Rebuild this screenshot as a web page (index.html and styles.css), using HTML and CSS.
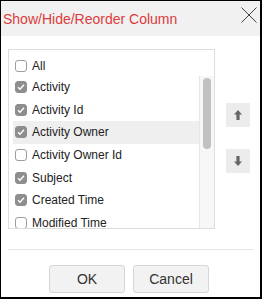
FILE: index.html
```html
<!DOCTYPE html>
<html>
<head>
<meta charset="utf-8">
<link rel="stylesheet" href="styles.css">
</head>
<body>
<div class="dialog">
  <div class="header">
    <span class="title">Show/Hide/Reorder Column</span>
    <span class="close"><svg width="16" height="16" viewBox="0 0 16 16"><path d="M0.5 0.5 L15.5 15.5 M15.5 0.5 L0.5 15.5" stroke="#444" stroke-width="1" fill="none"/></svg></span>
  </div>
  <div class="body">
    <div class="listbox">
      <div class="row all"><span class="cb"></span>All</div>
      <div class="scroll">
        <div class="items">
          <div class="row"><span class="cb on"><svg width="12" height="12" viewBox="0 0 12 12"><path d="M3 6.2 L5 8.2 L9 3.8" stroke="#fff" stroke-width="1.4" fill="none"/></svg></span>Activity</div>
          <div class="row"><span class="cb on"><svg width="12" height="12" viewBox="0 0 12 12"><path d="M3 6.2 L5 8.2 L9 3.8" stroke="#fff" stroke-width="1.4" fill="none"/></svg></span>Activity Id</div>
          <div class="row sel"><span class="cb on"><svg width="12" height="12" viewBox="0 0 12 12"><path d="M3 6.2 L5 8.2 L9 3.8" stroke="#fff" stroke-width="1.4" fill="none"/></svg></span>Activity Owner</div>
          <div class="row"><span class="cb"></span>Activity Owner Id</div>
          <div class="row"><span class="cb on"><svg width="12" height="12" viewBox="0 0 12 12"><path d="M3 6.2 L5 8.2 L9 3.8" stroke="#fff" stroke-width="1.4" fill="none"/></svg></span>Subject</div>
          <div class="row"><span class="cb on"><svg width="12" height="12" viewBox="0 0 12 12"><path d="M3 6.2 L5 8.2 L9 3.8" stroke="#fff" stroke-width="1.4" fill="none"/></svg></span>Created Time</div>
          <div class="row"><span class="cb"></span>Modified Time</div>
        </div>
        <div class="scrollbar"><div class="thumb"></div></div>
      </div>
    </div>
    <div class="movers">
      <span class="mv"><svg width="24" height="24" viewBox="0 0 24 24"><path d="M12 7 L16 11.5 L13.6 11.5 L13.6 17 L10.4 17 L10.4 11.5 L8 11.5 Z" fill="#666"/></svg></span>
      <span class="mv"><svg width="24" height="24" viewBox="0 0 24 24"><path d="M12 17 L16 12.5 L13.6 12.5 L13.6 7 L10.4 7 L10.4 12.5 L8 12.5 Z" fill="#666"/></svg></span>
    </div>
  </div>
  <div class="sep"></div>
  <div class="footer">
    <span class="btn">OK</span>
    <span class="btn">Cancel</span>
  </div>
</div>
</body>
</html>
```

FILE: styles.css
```css
* { box-sizing: border-box; }
html, body { margin: 0; padding: 0; background: #fff; }
body { font-family: "Liberation Sans", Arial, Helvetica, sans-serif; }

.dialog {
  width: 262px;
  height: 299px;
  border: 1px solid #000;
  border-right-width: 2px;
  border-bottom-width: 2px;
  background: #fff;
}

.header {
  height: 35px;
  background: #f1f1f1;
  display: flex;
  align-items: center;
  padding-left: 2px;
  position: relative;
}
.title {
  color: #dc3b3d;
  font-size: 14px;
  line-height: 16px;
}
.close {
  position: absolute;
  left: 240px;
  top: 6px;
  width: 16px;
  height: 16px;
  display: block;
}
.close svg { display: block; }

.body {
  display: flex;
  margin-top: 13px;
  padding-left: 7px;
}
.listbox {
  width: 207px;
  height: 180px;
  border: 1px solid #dddddd;
}
.row {
  display: flex;
  align-items: center;
  height: 22.6px;
  padding-left: 2px;
  font-size: 12px;
  color: #222;
}
.row.all {
  height: 16px;
  margin-top: 8px;
  margin-bottom: 2px;
  padding-left: 6px;
}
.row.sel { background: #efefef; }
.cb {
  width: 12px;
  height: 12px;
  border: 1px solid #9d9d9d;
  border-radius: 3px;
  background: #fff;
  margin-right: 5px;
  flex: none;
  display: block;
}
.cb.on {
  background: #8e8e8e;
  border-color: #8e8e8e;
}
.cb svg { display: block; margin: -1px; }

.scroll {
  display: flex;
  height: 152px;
}
.items {
  flex: 1;
  overflow: hidden;
  margin-left: 4px;
}
.scrollbar {
  width: 15px;
  background: #f7f7f7;
  border-left: 1px solid #e6e6e6;
  padding: 2px 0 0 3px;
}
.thumb {
  width: 8px;
  height: 71px;
  background: #c1c1c1;
  border-radius: 4px;
}

.movers {
  display: flex;
  flex-direction: column;
  gap: 22px;
  margin-left: 11px;
  padding-top: 54px;
}
.mv {
  width: 24px;
  height: 24px;
  background: #ececec;
  display: block;
}
.mv svg { display: block; }

.sep {
  height: 1px;
  width: 246px;
  margin-left: 7px;
  margin-top: 20px;
  background: #e5e5e5;
}

.footer {
  display: flex;
  gap: 8px;
  padding-left: 48px;
  margin-top: 15px;
}
.btn {
  width: 76px;
  height: 28px;
  border: 1px solid #d6d6d6;
  border-radius: 3px;
  background: #f2f2f2;
  display: flex;
  align-items: center;
  justify-content: center;
  font-size: 14px;
  color: #333;
}
```
